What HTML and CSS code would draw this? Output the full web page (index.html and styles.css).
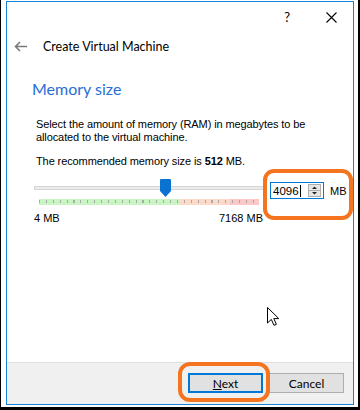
FILE: index.html
```html
<!DOCTYPE html>
<html lang="en">
<head>
    <meta charset="UTF-8">
    <meta name="viewport" content="width=device-width, initial-scale=1.0">
    <title>Create Virtual Machine</title>
    <link rel="stylesheet" href="styles.css">
</head>
<body>
    <div class="screen">
        <div class="window">
            <div class="titlebar">
                <span class="help-btn">?</span>
                <svg class="close-btn" width="11" height="11" viewBox="0 0 11 11">
                    <path d="M0.5 0.5 L10.5 10.5 M10.5 0.5 L0.5 10.5" stroke="#000" stroke-width="1.1" fill="none"/>
                </svg>
            </div>

            <div class="header">
                <svg class="back-arrow" width="13" height="11" viewBox="0 0 13 11">
                    <path d="M13 5.5 H1.5 M6 1 L1.5 5.5 L6 10" stroke="#7a7a7a" stroke-width="1.6" fill="none"/>
                </svg>
                <span class="header-title">Create Virtual Machine</span>
            </div>

            <div class="page">
                <h2 class="page-title">Memory size</h2>
                <p class="desc">Select the amount of memory (RAM) in megabytes to be<br>allocated to the virtual machine.</p>
                <p class="desc">The recommended memory size is <b>512</b> MB.</p>

                <div class="memory-row">
                    <div class="slider">
                        <div class="slider-bar">
                            <div class="slider-track"></div>
                            <!-- 4096 of 7168 MB -->
                            <svg class="slider-handle" style="left: 57.1%" width="11" height="18" viewBox="0 0 11 18">
                                <path d="M0 1 Q0 0 1 0 H10 Q11 0 11 1 V12 L5.5 18 L0 12 Z" fill="#0a72d0"/>
                            </svg>
                        </div>
                        <div class="slider-scale"></div>
                        <div class="slider-labels">
                            <span>4 MB</span>
                            <span>7168 MB</span>
                        </div>
                    </div>

                    <div class="spin-group">
                        <div class="spinbox">
                            <span class="spin-value">4096</span>
                            <span class="caret"></span>
                            <svg class="spin-buttons" width="13" height="13" viewBox="0 0 13 13">
                                <rect x="0.5" y="0.5" width="12" height="12" fill="#e6e6e6" stroke="#adadad"/>
                                <line x1="0.5" y1="6.5" x2="12.5" y2="6.5" stroke="#adadad"/>
                                <path d="M4 5 L6.5 2.5 L9 5 Z" fill="#222"/>
                                <path d="M4 8 L6.5 10.5 L9 8 Z" fill="#222"/>
                            </svg>
                        </div>
                        <span class="unit">MB</span>
                        <div class="highlight spin-highlight"></div>
                    </div>
                </div>
            </div>

            <div class="footer">
                <button class="btn btn-default"><u>N</u>ext</button>
                <button class="btn">Cancel</button>
                <div class="highlight next-highlight"></div>
            </div>

            <svg class="mouse-cursor" width="13" height="19" viewBox="0 0 13 19">
                <path d="M0.5 0.5 L0.5 16 L4.3 12.4 L7 18.3 L9.4 17.3 L6.8 11.6 L11.8 11.6 Z" fill="#fff" stroke="#000" stroke-width="1"/>
            </svg>
        </div>
    </div>
</body>
</html>
```

FILE: styles.css
```css
* {
    box-sizing: border-box;
}

body {
    margin: 0;
    background-color: white;
    font-family: "Liberation Sans", Arial, sans-serif;
    font-size: 11px;
    color: #000;
}

.screen {
    width: 360px;
    height: 410px;
    padding: 1px 0 0 5px;
    border-left: 1px solid #000;
    border-right: 2px solid #000;
    border-bottom: 3px solid #000;
}

.window {
    position: relative;
    width: 348px;
    height: 404px;
    border: 1px solid #1883d7;
    background-color: white;
    display: flex;
    flex-direction: column;
}

.titlebar {
    height: 30px;
    display: flex;
    align-items: center;
    justify-content: flex-end;
    gap: 36px;
    padding-right: 16px;
}

.help-btn {
    font-family: Lato, sans-serif;
    font-size: 13px;
    line-height: 13px;
}

.header {
    height: 28px;
    display: flex;
    align-items: center;
    padding-left: 7px;
}

.back-arrow {
    margin-right: 16px;
}

.header-title {
    font-family: Lato, sans-serif;
    font-size: 12.5px;
}

.page {
    flex: 1;
    padding-left: 25px;
}

.page-title {
    margin: 19px 0 0;
    font-family: Lato, sans-serif;
    font-weight: normal;
    font-size: 16px;
    line-height: 20px;
    color: #2a6ed4;
}

.desc {
    margin: 19px 0 0;
    padding-left: 4px;
    line-height: 13px;
    letter-spacing: -0.1px;
    white-space: nowrap;
}

.desc + .desc {
    margin-top: 11px;
}

.memory-row {
    display: flex;
    align-items: flex-start;
    margin-top: 11px;
    padding-left: 2px;
}

.slider {
    width: 230px;
}

.slider-bar {
    position: relative;
    height: 18px;
}

.slider-track {
    position: absolute;
    top: 7px;
    left: 0;
    right: 0;
    height: 4px;
    background-color: #ebebeb;
    border: 1px solid #d6d6d6;
}

.slider-handle {
    position: absolute;
    top: 0;
    margin-left: -5px;
}

.slider-scale {
    width: 220px;
    height: 6px;
    margin: 2px 0 0 5px;
    background:
        repeating-linear-gradient(to right, #a9a9a9 0 1px, transparent 1px 6.9px) 0 1px / 100% 3px no-repeat,
        linear-gradient(to right, #c9f4c3 0 141px, #fdd9c9 141px 191px, #fcc7c7 191px);
}

.slider-labels {
    display: flex;
    justify-content: space-between;
    width: 229px;
    margin-top: 7px;
    line-height: 13px;
}

.spin-group {
    position: relative;
    display: flex;
    align-items: center;
    gap: 6px;
    margin: 3px 0 0 6px;
}

.spinbox {
    width: 54px;
    height: 17px;
    border: 1px solid #0078d7;
    display: flex;
    align-items: center;
    padding-left: 2px;
}

.spin-value {
    font-size: 11.5px;
}

.caret {
    width: 1px;
    height: 12px;
    margin-left: 1px;
    background-color: #000;
}

.spin-buttons {
    margin-left: auto;
    margin-right: 2px;
}

.footer {
    position: relative;
    height: 42px;
    border-top: 1px solid #dfdfdf;
    background-color: #f0f0f0;
    display: flex;
    justify-content: flex-end;
    align-items: flex-start;
    gap: 6px;
    padding: 10px 9px 0 0;
}

.btn {
    width: 75px;
    height: 20px;
    padding: 0;
    border: 1px solid #adadad;
    background-color: #e1e1e1;
    font-family: Lato, sans-serif;
    font-size: 12px;
    color: #000;
}

.btn-default {
    border: 2px solid #0078d7;
}

.highlight {
    position: absolute;
    border: 4px solid #f47420;
    border-radius: 11px;
}

.spin-highlight {
    left: -7px;
    top: -13px;
    width: 90px;
    height: 51px;
}

.next-highlight {
    left: 171px;
    top: -1px;
    width: 92px;
    height: 40px;
    border-radius: 12px;
}

.mouse-cursor {
    position: absolute;
    left: 260px;
    top: 305px;
}
```
